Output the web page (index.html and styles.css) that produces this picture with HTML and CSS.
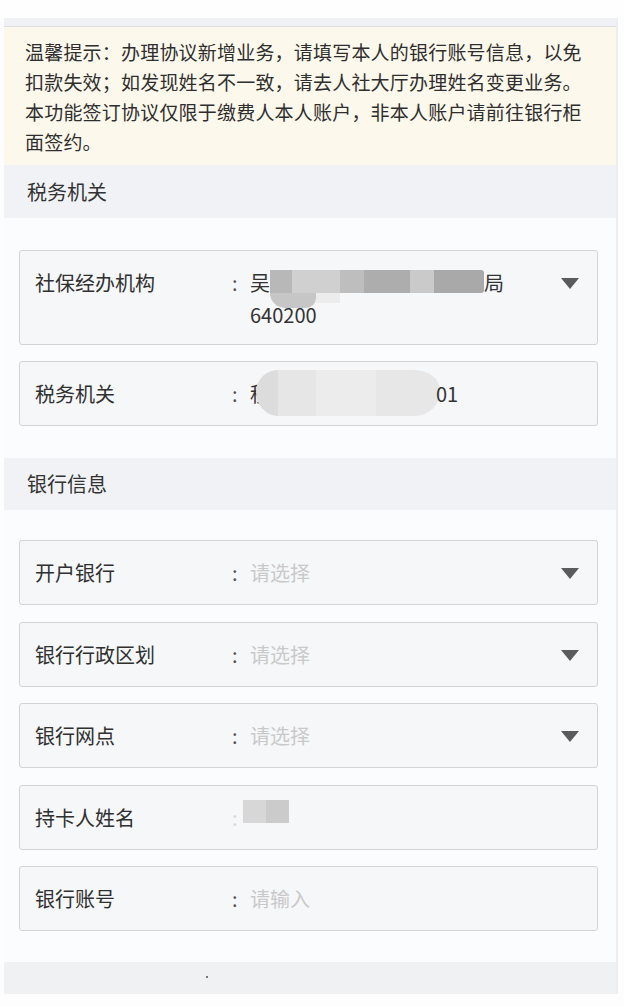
FILE: index.html
```html
<!DOCTYPE html>
<html>
<head>
  <title>银行账户签约</title>
  <link rel="stylesheet" href="styles.css">
</head>
<body>
  <div class="topbar"></div>
  <div class="page">
    <div class="notice">
      <p>温馨提示：办理协议新增业务，请填写本人的银行账号信息，以免扣款失效；如发现姓名不一致，请去人社大厅办理姓名变更业务。</p>
      <p>本功能签订协议仅限于缴费人本人账户，非本人账户请前往银行柜面签约。</p>
    </div>

    <div class="section-title">税务机关</div>
    <div class="form">
      <div class="field">
        <span class="label">社保经办机构</span>
        <span class="colon">:</span>
        <span class="value">吴<span class="mosaic"></span>局<br>640200</span>
        <svg class="arrow" width="18" height="11" viewBox="0 0 18 11"><polygon points="0,0 18,0 9,11" /></svg>
      </div>
      <div class="field">
        <span class="label">税务机关</span>
        <span class="colon">:</span>
        <span class="value">税<span class="blob"></span>01</span>
      </div>
    </div>

    <div class="section-title second">银行信息</div>
    <div class="form bank">
      <div class="field">
        <span class="label">开户银行</span>
        <span class="colon">:</span>
        <span class="value placeholder">请选择</span>
        <svg class="arrow" width="18" height="11" viewBox="0 0 18 11"><polygon points="0,0 18,0 9,11" /></svg>
      </div>
      <div class="field">
        <span class="label">银行行政区划</span>
        <span class="colon">:</span>
        <span class="value placeholder">请选择</span>
        <svg class="arrow" width="18" height="11" viewBox="0 0 18 11"><polygon points="0,0 18,0 9,11" /></svg>
      </div>
      <div class="field">
        <span class="label">银行网点</span>
        <span class="colon">:</span>
        <span class="value placeholder">请选择</span>
        <svg class="arrow" width="18" height="11" viewBox="0 0 18 11"><polygon points="0,0 18,0 9,11" /></svg>
      </div>
      <div class="field">
        <span class="label">持卡人姓名</span>
        <span class="colon faint">:</span>
        <span class="value"><span class="name-mosaic"></span></span>
      </div>
      <div class="field">
        <span class="label">银行账号</span>
        <span class="colon">:</span>
        <span class="value placeholder">请输入</span>
      </div>
    </div>

    <div class="footer-band"><span class="dot"></span></div>
  </div>
</body>
</html>
```

FILE: styles.css
```css
body {
  margin: 0;
  background: #fdfdfe;
  font-family: "Noto Sans CJK SC", "Noto Sans", sans-serif;
  color: #333;
}

.topbar {
  height: 18px;
  background: #fefefe;
}

.page {
  width: 612px;
  margin-left: 4px;
  padding-top: 8px;
  background: #eff1f4;
  border-right: 2px solid #eceef1;
}

.notice {
  border-top: 1px solid #dde0e4;
  background: #fdf8ec;
  padding: 10px 30px 8px 21px;
  font-size: 19px;
  letter-spacing: 0.2px;
  line-height: 30px;
  color: #2e2e2e;
}
.notice p {
  margin: 0;
}

.section-title {
  height: 53px;
  line-height: 53px;
  padding-left: 23px;
  font-size: 20px;
  background: #f1f2f5;
  color: #333;
}
.section-title.second {
  height: 52px;
  line-height: 52px;
}

.form {
  background: #fbfcfe;
  padding: 32px 18px 32px 15px;
  display: flex;
  flex-direction: column;
  gap: 16px;
}
.form.bank {
  padding: 30px 18px 31px 15px;
  gap: 16.5px;
}

.field {
  display: flex;
  align-items: flex-start;
  box-sizing: border-box;
  min-height: 65px;
  padding: 16px 18px 13px 15px;
  border: 1px solid #d2d4d8;
  border-radius: 3px;
  background: #f6f7f9;
  font-size: 20px;
  line-height: 32px;
}

.label {
  width: 197px;
  flex-shrink: 0;
  color: #303030;
}
.colon {
  width: 18px;
  flex-shrink: 0;
  color: #555;
}
.colon.faint {
  color: #d8d8d8;
}
.value {
  flex: 1;
  color: #333;
}
.placeholder {
  color: #c9c9c9;
}

.arrow {
  flex-shrink: 0;
  margin-top: 11px;
  fill: #5b5b5b;
}

/* blurred personal data */
.mosaic {
  position: relative;
  display: inline-block;
  width: 214px;
  height: 23px;
  vertical-align: -2px;
  border-radius: 0 3px 3px 0;
  background: linear-gradient(90deg,
    #b8b8b8 0 22px, #d0d0d0 22px 70px, #bebebe 70px 94px,
    #adadad 94px 140px, #cacaca 140px 164px, #a9a9a9 164px);
}
.mosaic::before {
  content: "";
  position: absolute;
  left: 0;
  top: 23px;
  width: 46px;
  height: 15px;
  border-radius: 0 0 12px 18px;
  background: #c6c6c6;
}
.mosaic::after {
  content: "";
  position: absolute;
  left: 46px;
  top: 23px;
  width: 24px;
  height: 10px;
  background: #ececec;
}

.blob {
  display: inline-block;
  width: 184px;
  height: 46px;
  margin: -8px -4px -14px -14px;
  vertical-align: top;
  border-radius: 22px 26px 26px 22px / 22px 20px 24px 24px;
  background: linear-gradient(90deg,
    #dcdcdc 0 22px, #e6e6e6 22px 60px, #ececec 60px 120px, #e7e7e7 120px);
}

.name-mosaic {
  display: inline-block;
  width: 46px;
  height: 23px;
  margin-left: -7px;
  margin-top: -2px;
  vertical-align: top;
  background: linear-gradient(90deg, #d7d7d7 0 23px, #cbcbcb 23px);
}

.footer-band {
  height: 32px;
  background: #f0f1f3;
  position: relative;
}
.dot {
  position: absolute;
  left: 202px;
  top: 14px;
  width: 2px;
  height: 2px;
  background: #777;
}
```
